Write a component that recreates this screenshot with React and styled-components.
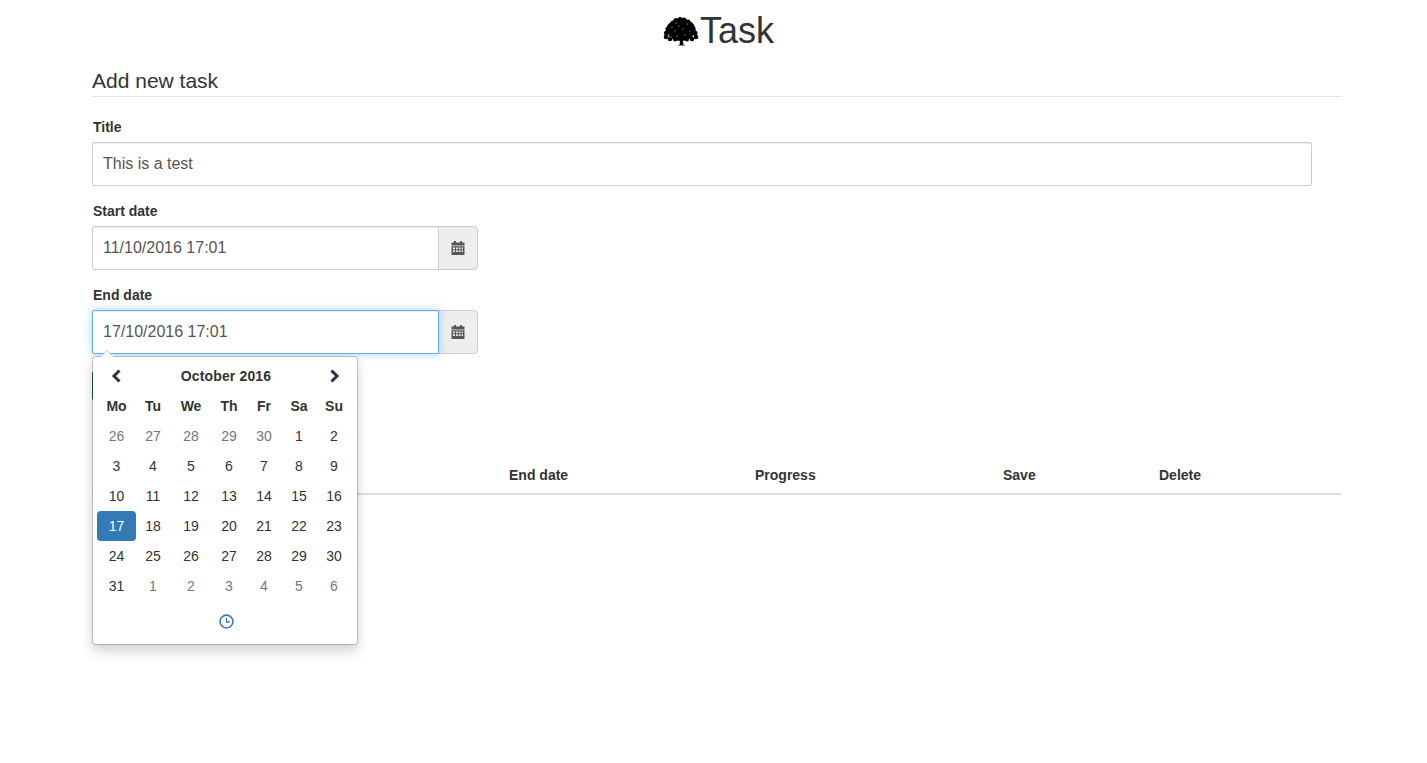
import styled, { createGlobalStyle } from "styled-components";

const GlobalStyle = createGlobalStyle`
    html, body {
        margin: 0;
        background: #fff;
        font-family: "Liberation Sans", Arial, sans-serif;
        font-size: 14px;
        color: #333;
    }
    * {
        box-sizing: border-box;
    }
`;

const Page = styled.div`
    width: 1250px;
    margin-left: 92px;
    min-height: 763px;
    position: relative;
`;

const Brand = styled.h1`
    margin: 0;
    height: 60px;
    display: flex;
    align-items: center;
    justify-content: center;
    gap: 1px;
    font-size: 36px;
    font-weight: 400;
    color: #333;
    padding: 2px 0 0 3px;
`;

const Legend = styled.div`
    margin-top: 6px;
    height: 31px;
    font-size: 21px;
    line-height: 30px;
    color: #333;
    border-bottom: 1px solid #e5e5e5;
`;

const Group = styled.div`
    display: flex;
    flex-direction: column;
    margin-top: ${({ $top }) => $top || 15}px;
    position: relative;
`;

const Label = styled.label`
    font-weight: 700;
    font-size: 14px;
    line-height: 20px;
    height: 20px;
    margin: 0 0 5px 1px;
    color: #333;
`;

const Input = styled.input`
    height: 44px;
    width: ${({ $wide }) => ($wide ? "1220px" : "347px")};
    padding: 0 10px;
    font-family: inherit;
    font-size: 16px;
    color: #555;
    background: #fff;
    border: 1px solid ${({ $focus }) => ($focus ? "#66afe9" : "#ccc")};
    border-radius: ${({ $wide }) => ($wide ? "2px" : "2px 0 0 2px")};
    box-shadow: ${({ $focus }) =>
        $focus ? "inset 0 1px 1px rgba(0,0,0,.075), 0 0 8px rgba(102,175,233,.6)" : "inset 0 1px 1px rgba(0,0,0,.075)"};
    outline: none;
    position: relative;
    z-index: ${({ $focus }) => ($focus ? 1 : 0)};
`;

const InputRow = styled.div`
    display: flex;
    width: 386px;
`;

const Addon = styled.span`
    width: 40px;
    height: 44px;
    margin-left: -1px;
    padding-right: 1px;
    display: flex;
    align-items: center;
    justify-content: center;
    background: #eee;
    border: 1px solid #ccc;
    border-radius: 0 4px 4px 0;
    color: #555;
`;

const SubmitButton = styled.button`
    display: block;
    margin-top: 16px;
    width: 120px;
    height: 32px;
    background: #337ab7;
    border: 1px solid #1f5480;
    border-radius: 4px;
`;

const TableHead = styled.div`
    margin-top: 54px;
    margin-right: 1px;
    height: 39px;
    display: grid;
    grid-template-columns: 409px 246px 248px 156px 1fr;
    align-items: center;
    border-bottom: 2px solid #ddd;
`;

const HeadCell = styled.div`
    padding-left: 8px;
    font-weight: 700;
    font-size: 14px;
    color: #333;
`;

const Picker = styled.div`
    position: absolute;
    top: 71px;
    left: 0;
    width: 266px;
    height: 289px;
    padding: 4px;
    background: #fff;
    background-clip: padding-box;
    border: 1px solid rgba(0, 0, 0, 0.2);
    border-radius: 4px;
    box-shadow: 0 6px 12px rgba(0, 0, 0, 0.175);
    z-index: 10;

    &::before {
        content: "";
        position: absolute;
        top: -7px;
        left: 7px;
        border-left: 7px solid transparent;
        border-right: 7px solid transparent;
        border-bottom: 7px solid #ccc;
    }

    &::after {
        content: "";
        position: absolute;
        top: -6px;
        left: 8px;
        border-left: 6px solid transparent;
        border-right: 6px solid transparent;
        border-bottom: 6px solid #fff;
    }
`;

const DayGrid = styled.div`
    display: grid;
    grid-template-columns: 39px 34px 42px 34px 36px 34px 36px;
    grid-auto-rows: 30px;
`;

const PickerTop = styled.div`
    height: 30px;
    display: grid;
    grid-template-columns: 38px 1fr 36px;
    align-items: center;
    justify-items: center;
    font-weight: 700;
    letter-spacing: 0.15px;
    color: #333;
`;

const Weekday = styled.div`
    display: flex;
    align-items: center;
    justify-content: center;
    font-weight: 700;
    color: #333;
`;

const Day = styled.div`
    display: flex;
    align-items: center;
    justify-content: center;
    border-radius: 4px;
    color: ${({ $active, $muted }) => ($active ? "#fff" : $muted ? "#777" : "#333")};
    background: ${({ $active }) => ($active ? "#337ab7" : "transparent")};
`;

const PickerSwitch = styled.div`
    height: 40px;
    display: flex;
    align-items: center;
    justify-content: center;
    padding-left: 3px;
    color: #337ab7;
`;

const weekdays = ["Mo", "Tu", "We", "Th", "Fr", "Sa", "Su"];

const days = [
    ...[26, 27, 28, 29, 30].map((d) => ({ d, muted: true })),
    ...Array.from({ length: 31 }, (_, i) => ({ d: i + 1 })),
    ...[1, 2, 3, 4, 5, 6].map((d) => ({ d, muted: true })),
];

// small bumps around the crown so the edge reads as leaves
const canopy = [
    [17, 3.5, 2.5], [21, 4, 2.5], [13, 4.5, 2.5], [25, 6, 2.5], [10, 7, 2.5],
    [28, 9, 2.5], [7, 10, 2.5], [30, 13, 2.5], [5, 13, 2.5], [32, 17, 2.5],
    [3.5, 17, 2.5], [33, 21, 2.3], [3, 21, 2.3], [29, 23, 2.3], [7, 23, 2.3],
    [24, 23.5, 2], [12, 23.5, 2],
];

const specks = [
    [9, 11], [13, 7], [12, 15], [6, 18], [16, 10], [20, 13],
    [24, 8], [27, 15], [14, 20], [22, 19], [30, 20], [8, 21],
];

const TreeLogo = () => (
    <svg width="36" height="30" viewBox="0 0 36 30">
        <ellipse cx="18" cy="14" rx="14.500" ry="11" fill="#000" />
        {canopy.map(([cx, cy, r], i) => (
            <circle key={i} cx={cx} cy={cy} r={r} fill="#000" />
        ))}
        <path fill="#000" d="M16.500 29l.8-6h2.400l.8 6z" />
        <path fill="#888" d="M15 29h7v1h-7z" />
        {specks.map(([cx, cy], i) => (
            <circle key={i} cx={cx} cy={cy} r=".5" fill="#fff" />
        ))}
    </svg>
);

const CalendarIcon = () => (
    <svg width="14" height="14" viewBox="0 0 14 14">
        <path fill="#555" d="M3 0h2v1.500h4V0h2v1.500h2.500v3H.5v-3H3z" />
        <path
            fill="#555"
            fillRule="evenodd"
            d="M.5 5.300h13V14H.5zM2 6.500v1.700h2V6.500zm3 0v1.700h1.800V6.500zm2.800 0v1.700h1.800V6.500zm2.800 0v1.700H12V6.500zM2 9.300V11h2V9.300zm3 0V11h1.800V9.300zm2.800 0V11h1.800V9.300zm2.800 0V11H12V9.300z"
        />
    </svg>
);

const Chevron = ({ left }) => (
    <svg width="12" height="14" viewBox="0 0 12 14">
        <path
            fill="none"
            stroke="#2a3440"
            strokeWidth="3"
            d={left ? "M9.500 1.500 4 7l5.500 5.500" : "M2.500 1.500 8 7l-5.500 5.500"}
        />
    </svg>
);

const ClockIcon = () => (
    <svg width="15" height="15" viewBox="0 0 14 14">
        <circle cx="7" cy="7" r="6" fill="none" stroke="currentColor" strokeWidth="1.500" />
        <path fill="none" stroke="currentColor" strokeWidth="1.300" d="M7 3.500V7.500h3" />
    </svg>
);

const App = () => (
    <>
        <GlobalStyle />
        <Page>
            <Brand>
                <TreeLogo />
                Task
            </Brand>
            <Legend>Add new task</Legend>
            <Group $top={20}>
                <Label>Title</Label>
                <Input $wide defaultValue="This is a test" />
            </Group>
            <Group>
                <Label>Start date</Label>
                <InputRow>
                    <Input defaultValue="11/10/2016 17:01" />
                    <Addon>
                        <CalendarIcon />
                    </Addon>
                </InputRow>
            </Group>
            <Group>
                <Label>End date</Label>
                <InputRow>
                    <Input $focus defaultValue="17/10/2016 17:01" />
                    <Addon>
                        <CalendarIcon />
                    </Addon>
                </InputRow>
                <Picker>
                    <PickerTop>
                        <Chevron left />
                        <span>October 2016</span>
                        <Chevron />
                    </PickerTop>
                    <DayGrid>
                        {weekdays.map((w) => (
                            <Weekday key={w}>{w}</Weekday>
                        ))}
                        {days.map(({ d, muted }, i) => (
                            <Day key={i} $muted={muted} $active={!muted && d === 17}>
                                {d}
                            </Day>
                        ))}
                    </DayGrid>
                    <PickerSwitch>
                        <ClockIcon />
                    </PickerSwitch>
                </Picker>
            </Group>
            <SubmitButton aria-label="Add task" />
            <TableHead>
                <HeadCell />
                <HeadCell>End date</HeadCell>
                <HeadCell>Progress</HeadCell>
                <HeadCell>Save</HeadCell>
                <HeadCell>Delete</HeadCell>
            </TableHead>
        </Page>
    </>
);

export default App;
